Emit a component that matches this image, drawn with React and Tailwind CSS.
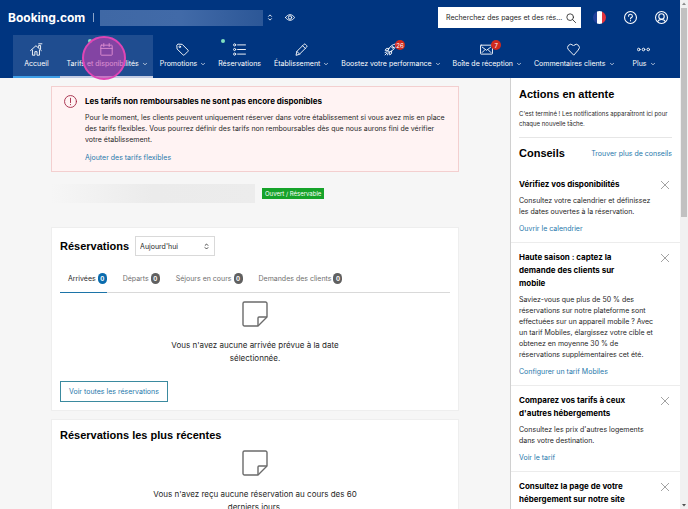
import React, { useState } from "react";

const iconProps = {
    viewBox: "0 0 24 24",
    fill: "none",
    stroke: "currentColor",
    strokeWidth: 1.7,
    strokeLinecap: "round",
    strokeLinejoin: "round",
    "aria-hidden": true,
};

const icons = {
    home: (
        <>
            <path d="M1 14 11 5l10 9" />
            <path d="M4.500 13v9.500h4.500V16h4v6.500h4.500V13" />
            <path d="M16 8V4.500h3.500V11" />
            <path d="M16 1.500h6" />
        </>
    ),
    calendar: (
        <>
            <rect x="1.500" y="4" width="21" height="18.500" rx="1" />
            <path d="M1.500 10h21M7 1v5.500M17 1v5.500" />
        </>
    ),
    tag: (
        <>
            <path d="M2 3.500 3.500 2l8 .5L22 13a1.800 1.800 0 0 1 0 2.500L15.500 22a1.800 1.800 0 0 1-2.500 0L2.500 11.500z" />
            <circle cx="7" cy="7" r="1.500" />
        </>
    ),
    list: (
        <>
            <circle cx="3" cy="3.500" r="2" />
            <circle cx="3" cy="12" r="2" />
            <circle cx="3" cy="20.500" r="2" />
            <path d="M8.500 3.500H23M8.500 12H23M8.500 20.500H23" />
        </>
    ),
    pencil: (
        <>
            <path d="M2 22l1.500-6.500L16.500 2.500a2 2 0 0 1 2.800 0l2.200 2.200a2 2 0 0 1 0 2.800L8.500 20.500z" />
            <path d="M14 5l5 5M3.500 15.500l5 5" />
        </>
    ),
    rocket: (
        <>
            <path d="M7.500 13.500C10 7 15 2.500 22.500 1.500 21.500 9 17 14 10.500 16.500z" />
            <path d="M9 10H4.500L2 13.500l5.500 0M14 15v4.500L10.500 22v-5.500" />
            <path d="M6 16l-4 1.500M8 18l-1.500 4M5.500 18.500 2 22" />
            <circle cx="16" cy="8" r="1.500" />
        </>
    ),
    mail: (
        <>
            <rect x="1" y="4" width="22" height="16.500" rx="1" />
            <path d="M4 7.500l8 6 8-6M4 17.500l5-5M20 17.500l-5-5" />
        </>
    ),
    heart: <path d="M12 22 2.800 12.500A5.800 5.800 0 0 1 11 4.200l1 1 1-1a5.800 5.800 0 0 1 8.200 8.300z" />,
    dots: (
        <>
            <circle cx="3.200" cy="12" r="2.400" />
            <circle cx="12" cy="12" r="2.400" />
            <circle cx="20.800" cy="12" r="2.400" />
        </>
    ),
};

function Icon({ name, className }) {
    return (
        <svg {...iconProps} className={className}>
            {icons[name]}
        </svg>
    );
}

function Chevron() {
    return (
        <svg {...iconProps} strokeWidth={4} className="size-1">
            <path d="M2 7l10 10L22 7" />
        </svg>
    );
}

function UpDown({ className }) {
    return (
        <svg viewBox="0 0 12 16" fill="none" stroke="currentColor" strokeWidth="2" aria-hidden="true" className={className}>
            <path d="M2 6l4-4 4 4M2 10l4 4 4-4" />
        </svg>
    );
}

const navItems = [
    { label: "Accueil", icon: "home", active: true },
    { label: "Tarifs et disponibilités", icon: "calendar", menu: true, dot: true, hovered: true },
    { label: "Promotions", icon: "tag", menu: true },
    { label: "Réservations", icon: "list", dot: true },
    { label: "Établissement", icon: "pencil", menu: true },
    { label: "Boostez votre performance", icon: "rocket", menu: true, count: 26 },
    { label: "Boîte de réception", icon: "mail", menu: true, count: 7 },
    { label: "Commentaires clients", icon: "heart", menu: true },
    { label: "Plus", icon: "dots", menu: true },
];

function NavItem({ item }) {
    let state = "border-transparent";
    if (item.active) state = "border-[#3f9fe8] bg-[#1f4d90]";
    if (item.hovered) state = "border-[#c3cbe2] bg-[#1f4d90]";

    return (
        <a
            href="#"
            className={`relative flex min-w-[47px] flex-auto flex-col items-center border-b-2 px-[6px] pt-2 pb-[7px] ${state}`}
        >
            <span className="relative">
                <Icon name={item.icon} className="size-[13px]" />
                {item.dot && <span className="absolute -top-1 -left-3 size-1 rounded-full bg-[#7fe0c0]" />}
                {item.count && (
                    <span className="absolute -top-[3px] left-[11px] flex h-[10px] min-w-[10px] items-center justify-center rounded-full bg-[#d02a1e] px-[1px] text-[6px]">
                        {item.count}
                    </span>
                )}
            </span>
            <span className="mt-[2px] flex items-center gap-1 whitespace-nowrap leading-[11px]">
                {item.label}
                {item.menu && <Chevron />}
            </span>
            {item.hovered && (
                <span className="absolute top-[1px] left-[22px] size-11 rounded-full border-2 border-[#df45b5] bg-[#c63fb0]/60" />
            )}
        </a>
    );
}

function Header() {
    return (
        <header className="relative z-10 bg-[#003580] text-white">
            <div className="flex h-[35px] items-center pr-3 pl-2">
                <a href="#" className="font-['Inter',sans-serif] text-[12px] leading-4 font-bold">Booking.com</a>
                <span className="ml-2 h-[9px] w-px bg-[#8aa3c8]" />
                <span className="ml-[6px] h-4 w-[163px] bg-linear-to-r from-[#3f68a5] via-[#416aa8] to-[#2c5797]" />
                <UpDown className="ml-1 h-[7px] w-[6px]" />
                <button type="button" aria-label="Aperçu" className="ml-3">
                    <svg {...iconProps} strokeWidth={2.500} className="h-[9px] w-[10px]">
                        <path d="M0 12c6-10 18-10 24 0-6 10-18 10-24 0z" />
                        <circle cx="12" cy="12" r="4.500" />
                    </svg>
                </button>
                <label className="ml-auto flex h-[21px] w-[143px] items-center bg-white pr-[5px] pl-2 text-[#262626]">
                    <input
                        type="text"
                        aria-label="Recherche"
                        placeholder="Recherchez des pages et des rés..."
                        className="min-w-0 flex-1 outline-none placeholder:text-[#262626]"
                    />
                    <svg {...iconProps} strokeWidth={2} className="size-[10px] shrink-0">
                        <circle cx="10" cy="10" r="8" />
                        <path d="M16 16l7 7" />
                    </svg>
                </label>
                <button type="button" aria-label="Français" className="ml-3">
                    <svg viewBox="0 0 26 26" className="size-[13px] overflow-hidden rounded-full">
                        <path fill="#20409a" d="M0 0h8v26H0z" />
                        <path fill="#fff" d="M8 0h10v26H8z" />
                        <path fill="#e2323c" d="M18 0h8v26h-8z" />
                    </svg>
                </button>
                <button type="button" aria-label="Aide" className="ml-[18px]">
                    <svg {...iconProps} strokeWidth={2} className="size-[13px]">
                        <circle cx="12" cy="12" r="11" />
                        <path d="M8.500 9.500c0-5 7-4.500 7 0 0 2.500-3.500 2.500-3.500 5M12 17.800v.4" />
                    </svg>
                </button>
                <button type="button" aria-label="Compte" className="ml-[18px]">
                    <svg {...iconProps} strokeWidth={2} className="size-[13px]">
                        <circle cx="12" cy="12" r="11" />
                        <circle cx="12" cy="10" r="5" />
                        <path d="M5 19.500c2-5 12-5 14 0" />
                    </svg>
                </button>
            </div>
            <nav className="flex pr-[13px] pl-[13px]">
                {navItems.map((item) => (
                    <NavItem key={item.label} item={item} />
                ))}
            </nav>
        </header>
    );
}

function AlertBox() {
    return (
        <section className="flex gap-2 border border-[#f3cfcf] bg-[#fff3f3] px-3 pt-2 pb-2">
            <svg {...iconProps} className="size-[13px] shrink-0 text-[#a52a48]">
                <circle cx="12" cy="12" r="11" />
                <path d="M12 6v8M12 17.500v.5" />
            </svg>
            <div>
                <h2 className="text-[8px] leading-[13px] font-bold text-black">
                    Les tarifs non remboursables ne sont pas encore disponibles
                </h2>
                <p className="mt-1">
                    Pour le moment, les clients peuvent uniquement réserver dans votre établissement si vous avez mis en place
                    des tarifs flexibles. Vous pourrez définir des tarifs non remboursables dès que nous aurons fini de vérifier
                    votre établissement.
                </p>
                <a href="#" className="mt-[7px] block text-[#1f78ab]">Ajouter des tarifs flexibles</a>
            </div>
        </section>
    );
}

function EmptyState({ children }) {
    return (
        <div className="flex flex-col items-center">
            <svg viewBox="0 0 26 26" fill="none" stroke="#6b6b6b" strokeWidth="1.400" strokeLinejoin="round" aria-hidden="true" className="size-[26px]">
                <path d="M2.500 1h21A1.500 1.500 0 0 1 25 2.500V16l-9 9H2.500A1.500 1.500 0 0 1 1 23.500v-21A1.500 1.500 0 0 1 2.500 1z" />
                <path d="M25 16h-8a1 1 0 0 0-1 1v8" />
            </svg>
            <p className="mt-3 max-w-[210px] text-center text-[8px] leading-[13px]">{children}</p>
        </div>
    );
}

const tabs = ["Arrivées", "Départs", "Séjours en cours", "Demandes des clients"];

function ReservationsCard() {
    const [activeTab, setActiveTab] = useState("Arrivées");

    return (
        <section className="border border-[#eeeeee] bg-white p-2">
            <div className="flex items-center gap-[6px]">
                <h2 className="font-['Liberation_Sans',Arial,sans-serif] text-[11px] leading-[14px] font-bold text-black">Réservations</h2>
                <div className="relative">
                    <select
                        aria-label="Période"
                        className="h-5 w-20 appearance-none border border-[#d9d9d9] bg-white pl-1 text-[7px] outline-none"
                    >
                        <option>Aujourd'hui</option>
                    </select>
                    <UpDown className="pointer-events-none absolute top-[7px] right-[6px] h-[7px] w-[5px]" />
                </div>
            </div>
            <div role="tablist" className="mt-3 flex gap-2 border-b border-[#d9d9d9]">
                {tabs.map((tab) => (
                    <button
                        key={tab}
                        type="button"
                        role="tab"
                        aria-selected={tab === activeTab}
                        onClick={() => setActiveTab(tab)}
                        className={`-mb-px flex items-center gap-[2px] border-b pt-[5px] pb-2 pl-2 ${
                            tab === activeTab ? "border-[#1c74a8] text-[#262626]" : "border-transparent text-[#6f6f6f]"
                        }`}
                    >
                        {tab}
                        <span
                            className={`flex h-[11px] w-[9px] items-center justify-center rounded-full text-[6px] font-bold text-white ${
                                tab === activeTab ? "bg-[#0a6cae]" : "bg-[#606060]"
                            }`}
                        >
                            0
                        </span>
                    </button>
                ))}
            </div>
            <div className="pt-2 pb-4">
                <EmptyState>Vous n'avez aucune arrivée prévue à la date sélectionnée.</EmptyState>
            </div>
            <button type="button" className="h-[21px] border border-[#3b8a9f] px-2 text-[#1f78ab]">
                Voir toutes les réservations
            </button>
        </section>
    );
}

const tips = [
    {
        title: "Vérifiez vos disponibilités",
        text: "Consultez votre calendrier et définissez les dates ouvertes à la réservation.",
        link: "Ouvrir le calendrier",
    },
    {
        title: "Haute saison : captez la demande des clients sur mobile",
        text: "Saviez-vous que plus de 50 % des réservations sur notre plateforme sont effectuées sur un appareil mobile ? Avec un tarif Mobiles, élargissez votre cible et obtenez en moyenne 30 % de réservations supplémentaires cet été.",
        link: "Configurer un tarif Mobiles",
    },
    {
        title: "Comparez vos tarifs à ceux d'autres hébergements",
        text: "Consultez les prix d'autres logements dans votre destination.",
        link: "Voir le tarif",
    },
    {
        title: "Consultez la page de votre hébergement sur notre site",
    },
];

function Tip({ tip }) {
    return (
        <li className="flex border-b border-[#ececec] py-2 pr-[10px] pl-2">
            <div className="flex-1">
                <h3 className="pr-4 text-[8px] leading-[13px] font-bold text-black">{tip.title}</h3>
                {tip.text && <p className="mt-1">{tip.text}</p>}
                {tip.link && <a href="#" className="mt-[6px] block text-[#1f78ab]">{tip.link}</a>}
            </div>
            <button type="button" aria-label="Fermer" className="mt-[2px] ml-1 self-start text-[#8c8c8c]">
                <svg viewBox="0 0 10 10" stroke="currentColor" strokeWidth="0.800" className="size-[10px]">
                    <path d="M1 1l8 8M9 1l-8 8" />
                </svg>
            </button>
        </li>
    );
}

function Sidebar() {
    return (
        <aside className="w-[170px] shrink-0 border-l border-[#d0d0d0] bg-white">
            <div className="mx-2 border-b border-[#e6e6e6] pt-[9px] pb-2">
                <h2 className="font-['Liberation_Sans',Arial,sans-serif] text-[11px] leading-[14px] font-bold text-black">Actions en attente</h2>
                <p className="mt-2 text-[6px] leading-[10px]">
                    C'est terminé ! Les notifications apparaîtront ici pour chaque nouvelle tâche.
                </p>
            </div>
            <div className="mx-2 flex items-center justify-between pt-2 pb-[10px]">
                <h2 className="font-['Liberation_Sans',Arial,sans-serif] text-[11px] leading-[14px] font-bold text-black">Conseils</h2>
                <a href="#" className="text-[#1f78ab]">Trouver plus de conseils</a>
            </div>
            <ul>
                {tips.map((tip) => (
                    <Tip key={tip.title} tip={tip} />
                ))}
            </ul>
        </aside>
    );
}

function Scrollbar() {
    return (
        <div aria-hidden="true" className="flex w-2 shrink-0 flex-col items-center bg-[#f1f1f1]">
            <svg viewBox="0 0 8 8" className="size-2 shrink-0 fill-[#8a8a8a]">
                <path d="M2 5l2-2.500L6 5z" />
            </svg>
            <div className="h-[41%] w-[6px] bg-[#c1c1c1]" />
            <svg viewBox="0 0 8 8" className="mt-auto size-2 shrink-0 fill-[#505050]">
                <path d="M2 3l2 2.500L6 3z" />
            </svg>
        </div>
    );
}

export default function App() {
    return (
        <div className="flex h-screen overflow-hidden bg-[#f6f6f6] font-['Inter','Liberation_Sans',sans-serif] text-[7px] leading-[11px] text-[#262626]">
            <div className="flex min-w-0 flex-1 flex-col">
                <Header />
                <div className="flex min-h-0 flex-1 overflow-hidden">
                    <main className="min-w-0 flex-1 px-[51px] pt-2">
                        <AlertBox />
                        <div className="mt-3 flex h-[19px] items-center">
                            <span className="h-full w-1/2 bg-linear-to-r from-[#f6f6f6] via-[#ebebeb] to-[#ececec]" />
                            <span className="ml-[7px] bg-[#16a32a] px-[3px] text-[6px] text-white">Ouvert / Réservable</span>
                        </div>
                        <div className="mt-6 flex flex-col gap-2">
                            <ReservationsCard />
                            <section className="border border-[#eeeeee] bg-white p-2">
                                <h2 className="mb-2 font-['Liberation_Sans',Arial,sans-serif] text-[11px] leading-[14px] font-bold text-black">
                                    Réservations les plus récentes
                                </h2>
                                <EmptyState>Vous n'avez reçu aucune réservation au cours des 60 derniers jours.</EmptyState>
                            </section>
                        </div>
                    </main>
                    <Sidebar />
                </div>
            </div>
            <Scrollbar />
        </div>
    );
}
